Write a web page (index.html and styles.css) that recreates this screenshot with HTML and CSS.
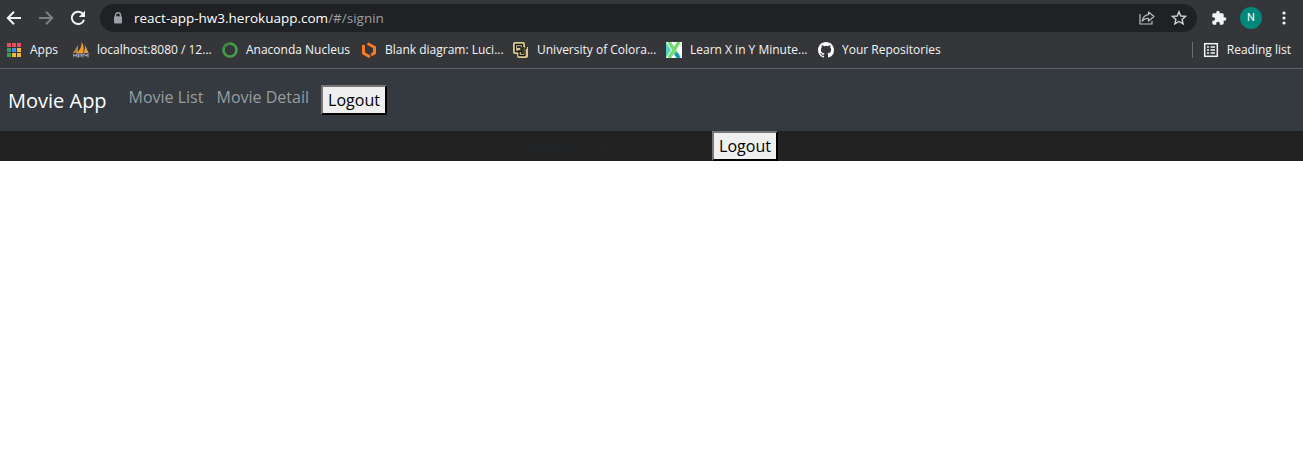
FILE: index.html
```html
<!DOCTYPE html>
<html lang="en">
<head>
<meta charset="utf-8">
<title>Movie App</title>
<link rel="stylesheet" href="styles.css">
</head>
<body>
<header class="browser">
  <div class="toolbar">
    <svg class="nav-icon" viewBox="0 0 16 16"><path d="M15 8H2M8 1.7L1.8 8L8 14.3" fill="none" stroke="#f1f3f4" stroke-width="2"/></svg>
    <svg class="nav-icon" viewBox="0 0 16 16"><path d="M1 8H14M8 1.7L14.2 8L8 14.3" fill="none" stroke="#7d7e81" stroke-width="2"/></svg>
    <svg class="nav-icon" viewBox="0 0 16 16"><path d="M13.1 4.2A6.2 6.2 0 1 0 14 9.7" fill="none" stroke="#f1f3f4" stroke-width="2"/><path d="M15 .8V7H8.8Z" fill="#f1f3f4"/></svg>
    <div class="address">
      <svg class="lock" viewBox="0 0 10 12"><path d="M2.5 5V3.3a2.5 2.5 0 0 1 5 0V5" fill="none" stroke="#9aa0a6" stroke-width="1.4"/><rect x="1" y="4.3" width="8" height="7.2" rx="1" fill="#9aa0a6"/></svg>
      <span class="url"><span class="host">react-app-hw3.herokuapp.com</span>/#/signin</span>
      <svg class="share" viewBox="0 0 16 16"><path d="M1 4V14H13V11" fill="none" stroke="#bdc1c6" stroke-width="1.2"/><path d="M9.5 2L15 6.5L9.5 11V8.5C7 8.3 5 9 3.2 11C3.8 7.5 6 5 9.500 4.600Z" fill="none" stroke="#bdc1c6" stroke-width="1.2" stroke-linejoin="round"/></svg>
      <svg class="star" viewBox="0 0 16 16"><path d="M8 1.7L9.8 6L14.500 6.400L11.100 9.400L12.100 13.900L8 11.500L3.900 13.900L4.900 9.400L1.500 6.400L6.200 6Z" fill="none" stroke="#d0d2d5" stroke-width="1.4"/></svg>
    </div>
    <svg class="puzzle" viewBox="0 0 24 24"><path d="M20.5 11H19V7c0-1.1-.9-2-2-2h-4V3.500a2.500 2.500 0 0 0-5 0V5H4c-1.100 0-2 .900-2 2v3.800h1.500a2.700 2.700 0 0 1 0 5.400H2V20c0 1.100.900 2 2 2h3.800v-1.500a2.700 2.700 0 0 1 5.400 0V22H17c1.100 0 2-.900 2-2v-4h1.500a2.500 2.500 0 0 0 0-5z" fill="#f1f3f4"/></svg>
    <span class="avatar">N</span>
    <svg class="dots" viewBox="0 0 4 16"><g fill="#f1f3f4"><circle cx="2" cy="3" r="1.600"/><circle cx="2" cy="8" r="1.600"/><circle cx="2" cy="13" r="1.600"/></g></svg>
  </div>
  <div class="bookmarks">
    <span class="mark apps"><svg class="fav" viewBox="0 0 16 16"><g fill="#e94f5a"><path d="M1 1h4v4H1zM6 1h4v4H6zM11 1h4v4h-4z"/></g><path d="M1 6h4v4H1zM1 11h4v4H1z" fill="#35a15c"/><path d="M6 6h4v4H6z" fill="#438df0"/><path d="M11 6h4v4h-4zM6 11h4v4H6zM11 11h4v4h-4z" fill="#f5b82e"/></svg><span class="label w-apps">Apps</span></span>
    <span class="mark local"><svg class="fav" viewBox="0 0 16 16"><path d="M0 11L5 3V11Z" fill="#b7853c"/><path d="M4 11Q9 6 8.500 0Q12 5 10 11Z" fill="#f8991d"/><path d="M10.500 11Q13 6 11.500 2L15.500 11Z" fill="#e4a153"/><path d="M0 15.500V12l2 2 2-2v3.500M5.500 15.500V12h3v2h-3M10 15.500V12h1l2 2 2-2v3.500" fill="none" stroke="#9da0b5" stroke-width="1.100"/></svg><span class="label w-local">localhost:8080 / 12...</span></span>
    <span class="mark ana"><svg class="fav" viewBox="0 0 16 16"><circle cx="8" cy="8" r="6.500" fill="none" stroke="#43a047" stroke-width="2.600"/><path d="M2 5.500A6.500 6.500 0 0 1 8 1.500" fill="none" stroke="#35373a" stroke-width="1" stroke-dasharray="1 1"/></svg><span class="label w-ana">Anaconda Nucleus</span></span>
    <span class="mark luci"><svg class="fav" viewBox="0 0 16 16"><path d="M2.500 3V11.200L9 15M6.500 1.500L13.500 5.300V11L10.300 13" fill="none" stroke="#f47b20" stroke-width="3"/></svg><span class="label w-luci">Blank diagram: Luci...</span></span>
    <span class="mark colo"><svg class="fav" viewBox="0 0 16 16"><g fill="none" stroke-linejoin="round"><path d="M10 5V2H2V10H6M6 6V14H13V5" stroke="#d9c790" stroke-width="4"/><path d="M9.500 5V2.500H2.500V9.500H8V6M6 8V13.500H12V6H14" stroke="#17150f" stroke-width="1.300"/></g></svg><span class="label w-colo">University of Colora...</span></span>
    <span class="mark learn"><svg class="fav" viewBox="0 0 16 16"><path d="M0 0h16v16H0z" fill="#fff"/><path d="M0 0L5 8L0 16Z" fill="#54d4bf"/><path d="M9 10L13 16" stroke="#1593bd" stroke-width="4"/><path d="M3 0L10 11M13 0L3 16" fill="none" stroke="#75da72" stroke-width="3.500"/></svg><span class="label w-learn">Learn X in Y Minute...</span></span>
    <span class="mark git"><svg class="fav" viewBox="0 0 16 16"><path fill="#fff" d="M8 0C3.580 0 0 3.580 0 8c0 3.540 2.290 6.530 5.470 7.590.4.070.55-.17.55-.38 0-.19-.01-.82-.01-1.490-2.010.37-2.530-.49-2.690-.94-.09-.23-.48-.94-.82-1.130-.28-.15-.68-.52-.01-.53.63-.01 1.080.58 1.230.82.72 1.210 1.870.87 2.330.66.07-.52.28-.87.51-1.070-1.780-.2-3.640-.89-3.640-3.950 0-.87.31-1.590.82-2.150-.08-.2-.36-1.020.08-2.120 0 0 .67-.21 2.200.82a7.420 7.420 0 0 1 4 0c1.530-1.040 2.200-.82 2.200-.82.44 1.100.16 1.920.08 2.120.51.56.82 1.270.82 2.150 0 3.070-1.870 3.750-3.650 3.950.29.25.54.73.54 1.480 0 1.070-.01 1.930-.01 2.200 0 .21.15.46.55.38A8 8 0 0 0 16 8c0-4.420-3.580-8-8-8z"/></svg><span class="label w-git">Your Repositories</span></span>
    <span class="reading"><svg class="list" viewBox="0 0 16 16"><rect x="1.700" y="1.700" width="12.600" height="12.600" fill="none" stroke="#f1f3f4" stroke-width="1.500"/><path d="M4 5h2M7.500 5H12M4 8h2M7.500 8H12M4 11h2M7.500 11H12" stroke="#f1f3f4" stroke-width="1.600"/></svg><span class="label w-read">Reading list</span></span>
  </div>
</header>
<nav class="navbar">
  <a class="brand">Movie App</a>
  <a class="link first">Movie List</a>
  <a class="link second">Movie Detail</a>
  <button class="logout">Logout</button>
</nav>
<div class="status"><span class="user">Logged in as: </span><button class="logout flat">Logout</button></div>
</body>
</html>
```
FILE: styles.css
```css
* { box-sizing: border-box; }
body { margin: 0; background: #fff; font-family: "Open Sans", "Noto Sans", sans-serif; overflow: hidden; }
svg { display: block; flex: none; }
.browser { height: 69px; background: #35363a; border-bottom: 1px solid #5f6164; }
.toolbar { height: 36px; display: flex; align-items: center; padding-left: 6px; border-top: 0; }
.nav-icon { width: 16px; height: 16px; margin-right: 16px; }
.address { width: 1097px; height: 28px; margin-left: -2px; border-radius: 14px; background: #202124; display: flex; align-items: center; padding: 0 10px 0 13px; }
.lock { width: 10px; height: 12px; }
.url { margin-left: 11px; font-size: 13.500px; line-height: 20px; color: #9aa0a6; white-space: nowrap; }
.host { color: #fff; }
.share { width: 16px; height: 16px; margin-left: auto; }
.star { width: 16px; height: 16px; margin-left: 16px; }
.puzzle { width: 16px; height: 16px; margin-left: 14px; }
.avatar { width: 22px; height: 22px; margin-left: 13px; border-radius: 50%; background: #00897b; color: #fff; font: 11px/22px Roboto, sans-serif; text-align: center; }
.dots { width: 4px; height: 16px; margin-left: 20px; }
.bookmarks { height: 28px; display: flex; align-items: center; padding: 0 12px 0 6px; }
.mark, .reading { display: flex; align-items: center; flex: none; }
.fav { width: 16px; height: 16px; margin-right: 8px; }
.label { color: #f4f5f6; font-size: 12px; line-height: 18px; white-space: nowrap; }
.apps { width: 67px; }
.local { width: 149px; }
.ana { width: 139px; }
.luci { width: 152px; }
.colo { width: 153px; }
.learn { width: 152px; }
.reading { margin-left: auto; border-left: 1px solid #6b6d70; padding-left: 10px; height: 16px; }
.list { width: 16px; height: 16px; margin-right: 8px; }
.navbar { height: 62px; background: #343a40; display: flex; align-items: flex-start; padding: 16px 8px; }
.brand { width: 120.500px; font-size: 20px; line-height: 31px; color: #fff; white-space: nowrap; }
.link { font-size: 16px; line-height: 24px; color: #999c9f; white-space: nowrap; }
.first { width: 88px; }
.second { width: 104.500px; }
.logout { width: 66px; height: 30px; padding: 0; border: 2px outset #767676; border-color: #767676 #212121 #212121 #767676; background: #efefef; color: #000; font: 16px/24px "Open Sans", "Noto Sans", sans-serif; flex: none; }
.status { height: 30px; background: #222; display: flex; }
.user { width: 712px; padding-left: 519px; font-size: 16px; line-height: 30px; color: #212529; white-space: nowrap; }
.flat { border-color: #767676 #222 #222 #767676; }
```
